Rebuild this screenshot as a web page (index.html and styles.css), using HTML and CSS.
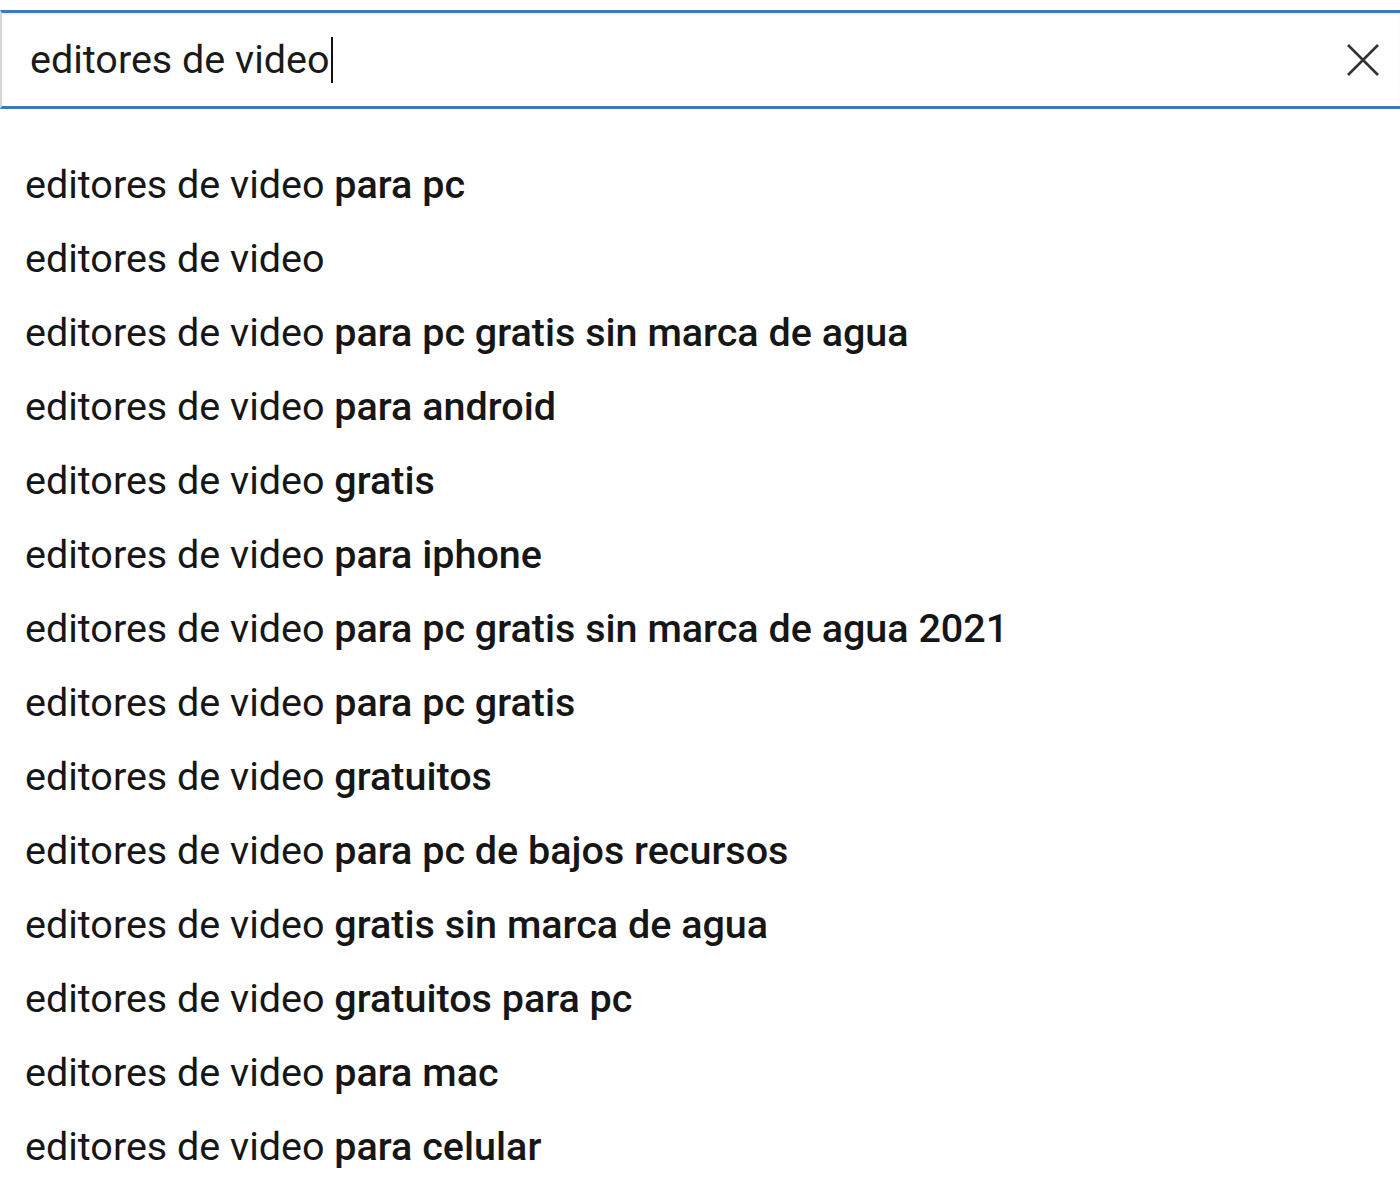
FILE: index.html
```html
<!DOCTYPE html>
<html lang="es">
<head>
<meta charset="utf-8">
<title>Búsqueda</title>
<link rel="stylesheet" href="styles.css">
</head>
<body>
<div class="search">
  <div class="query"><span class="query-text">editores de video</span><span class="caret"></span></div>
  <button class="clear" aria-label="Borrar">
    <svg viewBox="0 0 32 32" width="32" height="32"><path d="M1 1 L31 31 M31 1 L1 31" stroke="#333" stroke-width="2.6" fill="none"/></svg>
  </button>
</div>
<ul class="suggestions">
  <li>editores de video <b>para pc</b></li>
  <li>editores de video</li>
  <li>editores de video <b>para pc gratis sin marca de agua</b></li>
  <li>editores de video <b>para android</b></li>
  <li>editores de video <b>gratis</b></li>
  <li>editores de video <b>para iphone</b></li>
  <li>editores de video <b>para pc gratis sin marca de agua 2021</b></li>
  <li>editores de video <b>para pc gratis</b></li>
  <li>editores de video <b>gratuitos</b></li>
  <li>editores de video <b>para pc de bajos recursos</b></li>
  <li>editores de video <b>gratis sin marca de agua</b></li>
  <li>editores de video <b>gratuitos para pc</b></li>
  <li>editores de video <b>para mac</b></li>
  <li>editores de video <b>para celular</b></li>
</ul>
</body>
</html>
```

FILE: styles.css
```css
html, body {
  margin: 0;
  padding: 0;
  background: #ffffff;
}
body {
  font-family: Roboto, "Liberation Sans", Arial, sans-serif;
  color: #161616;
  overflow: hidden;
}
.search {
  margin-top: 10px;
  height: 93px;
  border-top: 3px solid #3d77c6;
  border-bottom: 3px solid #3d77c6;
  border-left: 2px solid #d6d6d6;
  box-shadow: inset 0 2px 2px rgba(0,0,0,0.06);
  display: flex;
  align-items: center;
  padding-left: 28px;
  padding-right: 21px;
}
.query {
  flex: 1;
  display: flex;
  align-items: center;
  font-size: 39.5px;
  line-height: 46px;
  color: #1a1a1a;
}
.caret {
  display: inline-block;
  width: 2px;
  height: 46px;
  background: #111;
  margin-left: 1px;
}
.clear {
  border: 0;
  background: transparent;
  padding: 0;
  width: 32px;
  height: 32px;
  display: flex;
}
.suggestions {
  list-style: none;
  margin: 0;
  padding: 39px 0 0 25px;
}
.suggestions li {
  height: 74px;
  line-height: 74px;
  font-size: 39.5px;
  white-space: nowrap;
}
.suggestions b {
  font-weight: 500;
}
```
